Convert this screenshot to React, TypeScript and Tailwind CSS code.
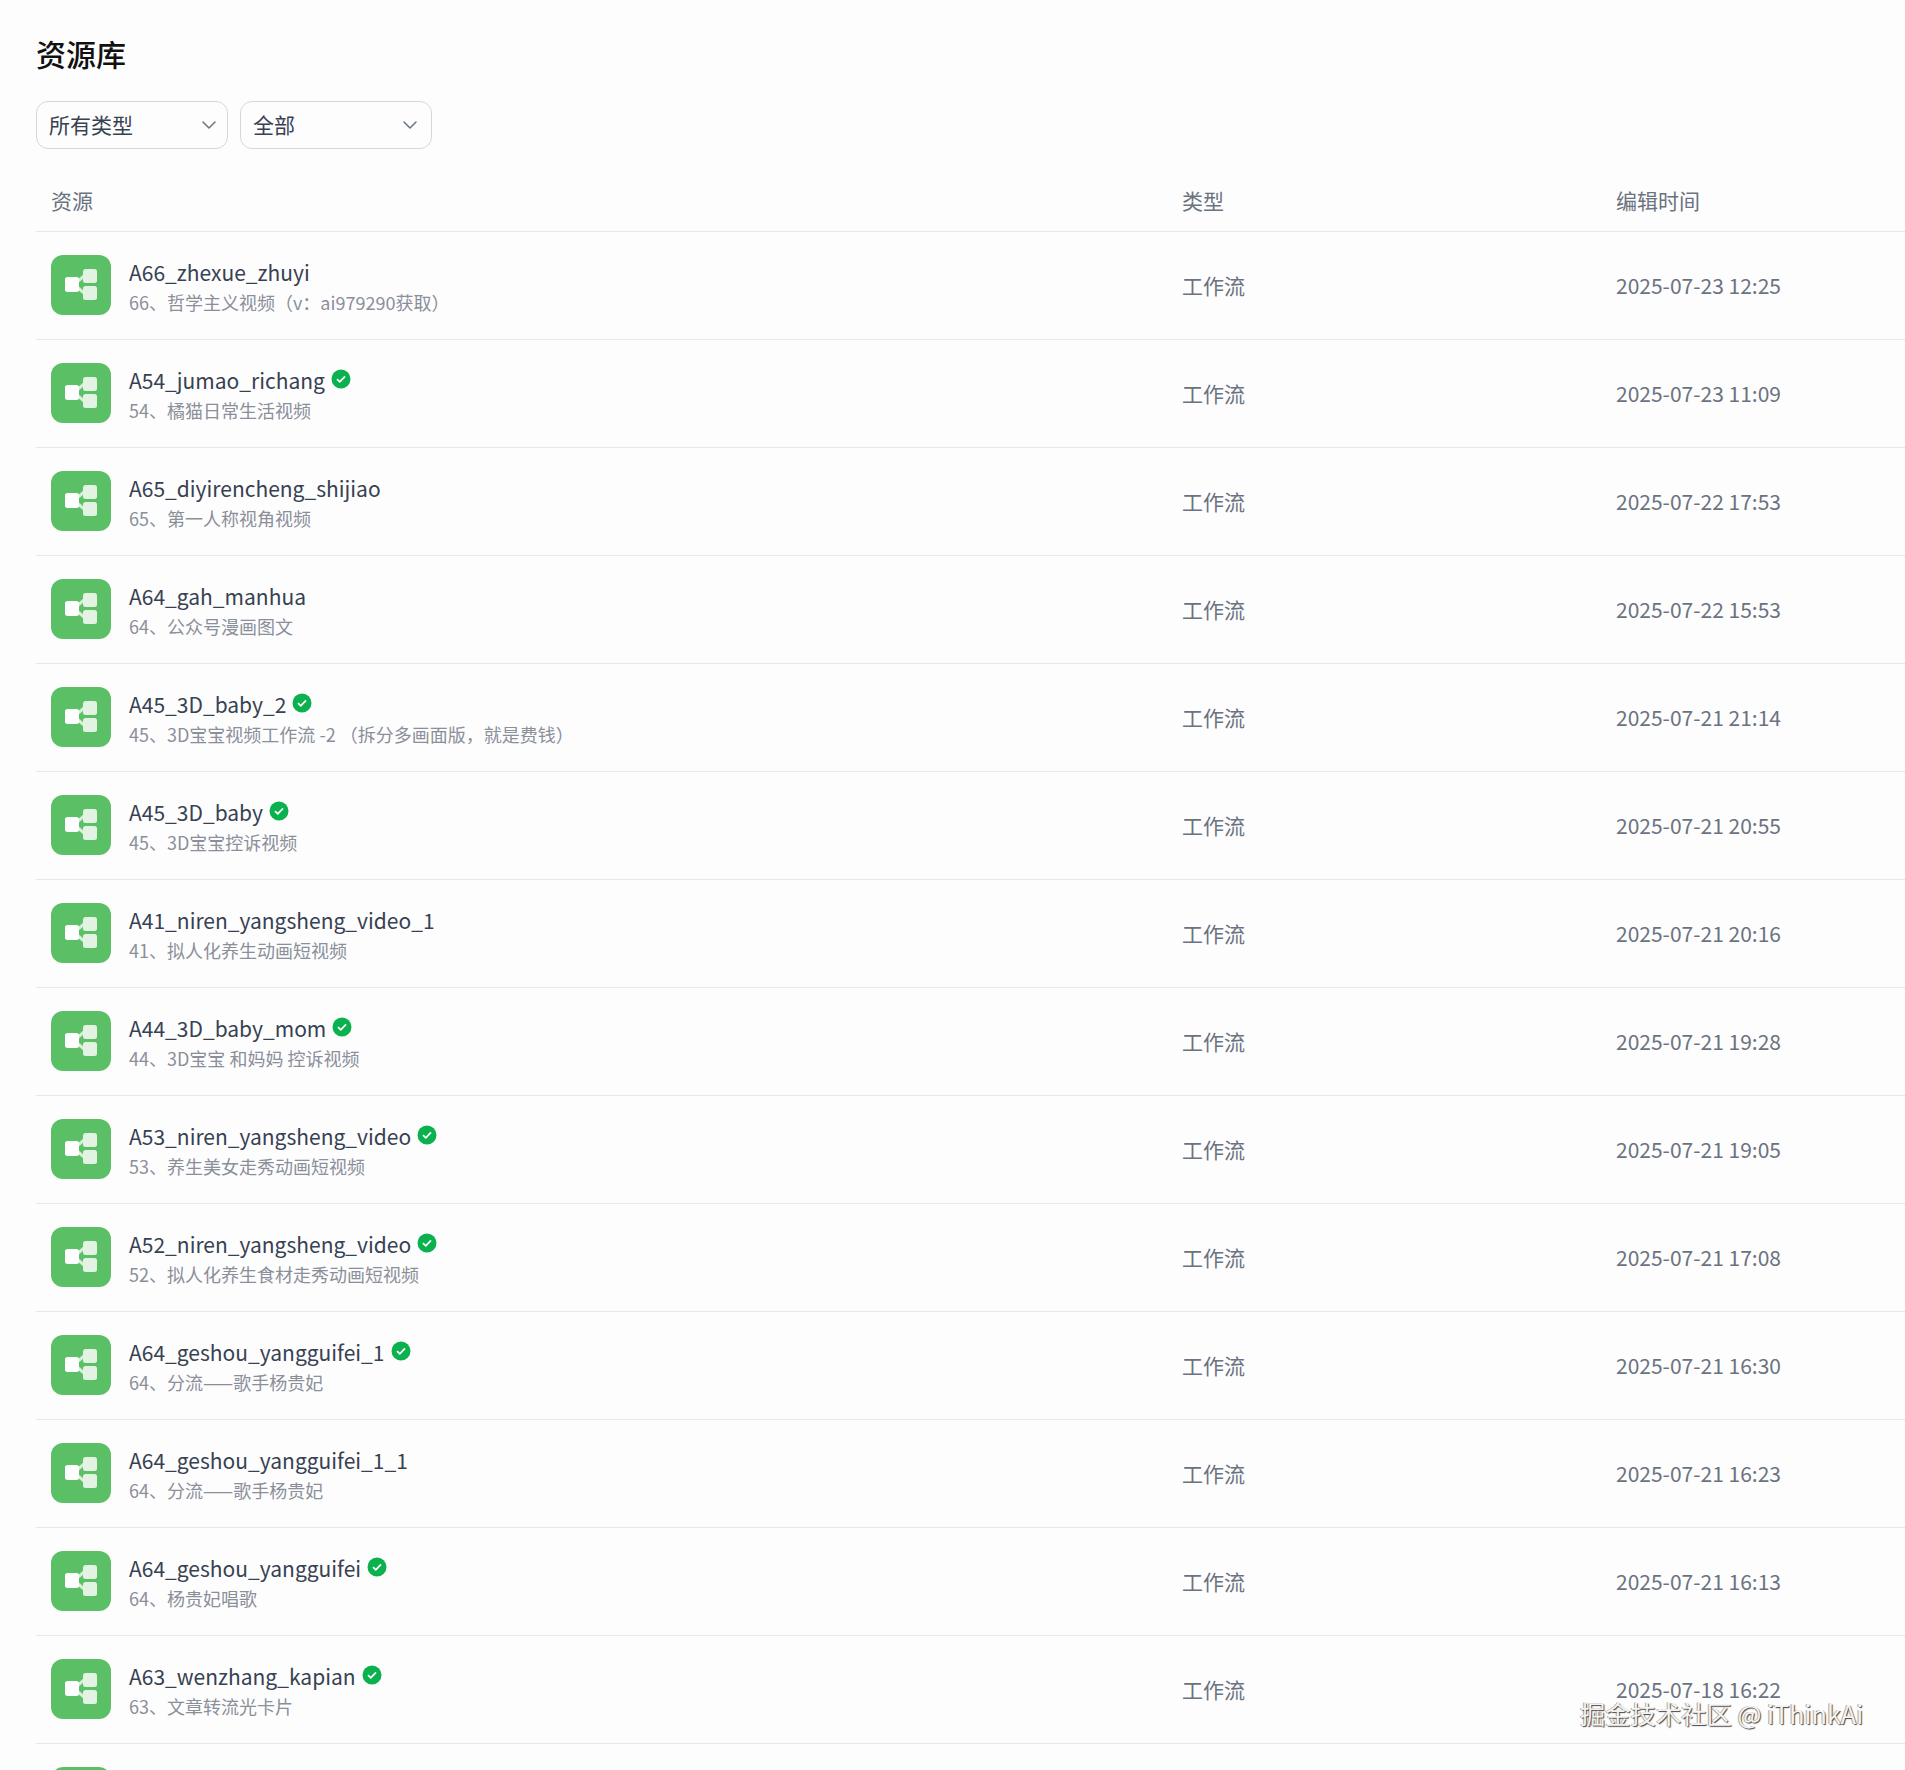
import { ChevronDown } from 'lucide-react';
import clsx from 'clsx';

type Row = { name: string; desc: string; time: string; verified?: boolean };

const rows: Row[] = [
  { name: 'A66_zhexue_zhuyi', desc: '66、哲学主义视频（v：ai979290获取）', time: '2025-07-23 12:25' },
  { name: 'A54_jumao_richang', desc: '54、橘猫日常生活视频', time: '2025-07-23 11:09', verified: true },
  { name: 'A65_diyirencheng_shijiao', desc: '65、第一人称视角视频', time: '2025-07-22 17:53' },
  { name: 'A64_gah_manhua', desc: '64、公众号漫画图文', time: '2025-07-22 15:53' },
  { name: 'A45_3D_baby_2', desc: '45、3D宝宝视频工作流 -2 （拆分多画面版，就是费钱）', time: '2025-07-21 21:14', verified: true },
  { name: 'A45_3D_baby', desc: '45、3D宝宝控诉视频', time: '2025-07-21 20:55', verified: true },
  { name: 'A41_niren_yangsheng_video_1', desc: '41、拟人化养生动画短视频', time: '2025-07-21 20:16' },
  { name: 'A44_3D_baby_mom', desc: '44、3D宝宝 和妈妈 控诉视频', time: '2025-07-21 19:28', verified: true },
  { name: 'A53_niren_yangsheng_video', desc: '53、养生美女走秀动画短视频', time: '2025-07-21 19:05', verified: true },
  { name: 'A52_niren_yangsheng_video', desc: '52、拟人化养生食材走秀动画短视频', time: '2025-07-21 17:08', verified: true },
  { name: 'A64_geshou_yangguifei_1', desc: '64、分流——歌手杨贵妃', time: '2025-07-21 16:30', verified: true },
  { name: 'A64_geshou_yangguifei_1_1', desc: '64、分流——歌手杨贵妃', time: '2025-07-21 16:23' },
  { name: 'A64_geshou_yangguifei', desc: '64、杨贵妃唱歌', time: '2025-07-21 16:13', verified: true },
  { name: 'A63_wenzhang_kapian', desc: '63、文章转流光卡片', time: '2025-07-18 16:22', verified: true },
];

function WorkflowIcon() {
  return (
    <div className="flex h-[60px] w-[60px] shrink-0 items-center justify-center rounded-[12px] bg-[#5bbf66]">
      <svg width="60" height="60" viewBox="0 0 60 60" fill="none">
        <path d="M26 27 L33 21 M26 32 L33 38" stroke="#d6eeda" strokeWidth="3" />
        <rect x="14" y="22" width="14" height="15" rx="2.5" fill="#ffffff" />
        <rect x="32" y="14" width="14" height="14" rx="2.5" fill="#e2f3e4" />
        <rect x="32" y="31" width="14" height="14" rx="2.5" fill="#e2f3e4" />
      </svg>
    </div>
  );
}

function VerifiedBadge() {
  return (
    <svg width="20" height="20" viewBox="0 0 20 20" className="ml-[6px] mt-[-2px] shrink-0">
      <circle cx="10" cy="10" r="9.5" fill="#0bb14e" />
      <path d="M6 10.2 L8.8 12.8 L14 7.4" stroke="#ffffff" strokeWidth="1.8" fill="none" />
    </svg>
  );
}

function FilterSelect({ label, className }: { label: string; className: string }) {
  return (
    <div className={clsx('flex h-[48px] w-[192px] items-center justify-between rounded-[12px] border border-[#d5d7dc] pl-[12px] text-[21px] text-[#374151]', className)}>
      <span>{label}</span>
      <ChevronDown className="h-[24px] w-[24px] text-[#6b7280]" strokeWidth={1.5} />
    </div>
  );
}

export default function App() {
  return (
    <div className="relative h-[1770px] overflow-hidden bg-[#fdfdfe] pl-[36px] font-['Noto_Sans_CJK_SC','Noto_Sans',sans-serif]">
      <h1 className="pt-[30px] text-[30px] font-medium leading-[46px] text-[#111111]">资源库</h1>
      <div className="mt-[25px] flex gap-[12px]">
        <FilterSelect label="所有类型" className="pr-[6px]" />
        <FilterSelect label="全部" className="pr-[9px]" />
      </div>

      <div className="mt-[21px] flex h-[62px] items-center border-b border-[#e6e7ea] pt-[1px] text-[21px] text-[#6b7280]">
        <div className="w-[1146px] pl-[15px]">资源</div>
        <div className="w-[434px]">类型</div>
        <div>编辑时间</div>
      </div>

      {rows.map((row) => (
        <div key={row.name} className="flex h-[108px] items-center border-b border-[#e6e7ea]">
          <div className="flex w-[1146px] items-center gap-[18px] pb-[1px] pl-[15px]">
            <WorkflowIcon />
            <div className="flex min-w-0 flex-col gap-[2px] pt-[3px]">
              <div className="flex items-center text-[21px] leading-[28px] text-[#374151]">
                {row.name}
                {row.verified && <VerifiedBadge />}
              </div>
              <div className="text-[18px] leading-[28px] text-[#8a8f99]">{row.desc}</div>
            </div>
          </div>
          <div className="w-[434px] text-[21px] text-[#6b7280]">工作流</div>
          <div className="text-[21px] text-[#6b7280]">{row.time}</div>
        </div>
      ))}

      <div className="flex h-[108px] items-start pl-[15px] pt-[23px]">
        <WorkflowIcon />
      </div>

      <div className="absolute left-[1580px] top-[1695px] text-[25.3px] leading-[36px] text-[#f4f4f4] [text-shadow:1px_1px_1px_#444,-1px_0_0_#aaa]">
        掘金技术社区 @ iThinkAi
      </div>
    </div>
  );
}
